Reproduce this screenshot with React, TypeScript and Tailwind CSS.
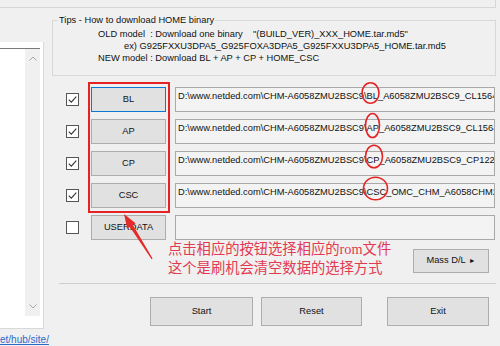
import React from "react";

const ui = { fontFamily: '"Liberation Sans", Arial, sans-serif' };

function Check({ checked }: { checked: boolean }) {
  return (
    <div className="w-[13px] h-[13px] border border-[#555] bg-white flex items-center justify-center shrink-0">
      {checked && (
        <svg width="11" height="11" viewBox="0 0 11 11">
          <path d="M1.8 5.6 L4.3 8.1 L9.3 2.6" fill="none" stroke="#333" strokeWidth="1.1" />
        </svg>
      )}
    </div>
  );
}

const rows = [
  { label: "BL", path: "D:\\www.netded.com\\CHM-A6058ZMU2BSC9\\BL_A6058ZMU2BSC9_CL15649xxx", checked: true, focus: true },
  { label: "AP", path: "D:\\www.netded.com\\CHM-A6058ZMU2BSC9\\AP_A6058ZMU2BSC9_CL15649xxx", checked: true },
  { label: "CP", path: "D:\\www.netded.com\\CHM-A6058ZMU2BSC9\\CP_A6058ZMU2BSC9_CP12295xxx", checked: true },
  { label: "CSC", path: "D:\\www.netded.com\\CHM-A6058ZMU2BSC9\\CSC_OMC_CHM_A6058CHM2BSC9", checked: true },
  { label: "USERDATA", path: "", checked: false },
];

export default function App() {
  return (
    <div
      className="relative w-[500px] h-[346px] bg-[#f0f0f0] overflow-hidden text-[9.3px] text-[#111] flex flex-col"
      style={ui}
    >
      {/* top group box remnant */}
      <div className="h-[8px] w-[496px] border-b border-r border-[#d6d6d6] shrink-0" />

      <div className="flex flex-row">
        {/* left column */}
        <div className="w-[44px] flex flex-col shrink-0">
          <div className="mt-[34px] h-[287px] bg-white border-r border-b border-[#d9d9d9] pt-[6px] flex flex-col">
            <div className="w-[40px] h-[268px] border-t border-[#7a7a7a] flex flex-row">
              <div className="flex-1 bg-white" />
              <div className="w-[15px] bg-[#f0f0f0] flex flex-col items-center justify-between py-[7px]">
                <svg width="8" height="5" viewBox="0 0 8 5">
                  <path d="M0.5 4.5 L4 1 L7.5 4.5" fill="none" stroke="#a6a6a6" strokeWidth="1" />
                </svg>
                <svg width="8" height="5" viewBox="0 0 8 5">
                  <path d="M0.5 0.5 L4 4 L7.5 0.5" fill="none" stroke="#a6a6a6" strokeWidth="1" />
                </svg>
              </div>
            </div>
          </div>
          <div className="mt-[5px] text-[10px] leading-[12px] text-[#2a6acb] underline whitespace-nowrap">
            et/hub/site/
          </div>
        </div>

        {/* right column */}
        <div className="ml-[8px] w-[444px] flex flex-col">
          {/* tips group */}
          <div className="relative mt-[12px] h-[56px] border border-[#d8d8d8] pt-[7px] leading-[12px]">
            <div className="absolute -top-[7px] left-[5px] px-[1px] bg-[#f0f0f0] leading-[12px]">
              Tips - How to download HOME binary
            </div>
            <div className="pl-[45px] whitespace-pre">{'OLD model  : Download one binary    "(BUILD_VER)_XXX_HOME.tar.md5"'}</div>
            <div className="pl-[71px] whitespace-pre">ex) G925FXXU3DPA5_G925FOXA3DPA5_G925FXXU3DPA5_HOME.tar.md5</div>
            <div className="pl-[45px] whitespace-pre">NEW model : Download BL + AP + CP + HOME_CSC</div>
          </div>

          {/* rows */}
          <div className="mt-[11px] flex flex-col gap-[7px]">
            {rows.map((r) => (
              <div key={r.label} className="h-[25px] flex flex-row items-center">
                <div className="ml-[14px]">
                  <Check checked={r.checked} />
                </div>
                <div
                  className={
                    r.focus
                      ? "ml-[12px] w-[75px] h-[25px] bg-[#e1e1e1] border border-[#0a78d4] flex items-center justify-center"
                      : "ml-[12px] w-[75px] h-[25px] bg-[#e1e1e1] border border-[#adadad] flex items-center justify-center"
                  }
                >
                  {r.label}
                </div>
                <div className="ml-[9px] w-[320px] h-[25px] bg-[#f3f3f3] border border-[#a9a9a9] overflow-hidden pl-[2px] pt-[2px] leading-[12px] whitespace-nowrap">
                  {r.path}
                </div>
              </div>
            ))}
          </div>

          {/* annotation + mass D/L */}
          <div className="h-[39px] flex flex-row items-start">
            <div
              className="ml-[116px] text-[14.3px] leading-[19px] text-[#e23a52] whitespace-nowrap"
              style={{ fontFamily: '"Liberation Serif", "Noto Sans CJK SC", serif' }}
            >
              <div>点击相应的按钮选择相应的rom文件</div>
              <div>这个是刷机会清空数据的选择方式</div>
            </div>
            <div className="ml-auto mr-[7px] mt-[9px] w-[76px] h-[24px] bg-[#e1e1e1] border border-[#adadad] flex items-center justify-center gap-[3px]">
              <span>Mass D/L</span>
              <span className="text-[7px]">►</span>
            </div>
          </div>

          <div className="mt-[4px] ml-[7px] border-t border-[#cfcfcf]" />

          <div className="mt-[13px] flex flex-row">
            <div className="ml-[98px] w-[103px] h-[29px] bg-[#e1e1e1] border border-[#adadad] flex items-center justify-center">
              Start
            </div>
            <div className="ml-[8px] w-[101px] h-[29px] bg-[#e1e1e1] border border-[#adadad] flex items-center justify-center">
              Reset
            </div>
            <div className="ml-[25px] w-[102px] h-[29px] bg-[#e1e1e1] border border-[#adadad] flex items-center justify-center">
              Exit
            </div>
          </div>
        </div>
      </div>

      {/* red annotation overlay */}
      <svg
        className="absolute left-0 top-0 pointer-events-none"
        width="500"
        height="346"
        viewBox="0 0 500 346"
      >
        <rect x="89" y="83" width="80" height="129" fill="none" stroke="#e42424" strokeWidth="2" />
        <ellipse cx="370.5" cy="93" rx="8.5" ry="10.3" fill="none" stroke="#e42424" strokeWidth="1.6" />
        <ellipse cx="372.5" cy="125.5" rx="7" ry="12" fill="none" stroke="#e42424" strokeWidth="1.6" />
        <ellipse cx="374" cy="156.5" rx="8.5" ry="11.3" fill="none" stroke="#e42424" strokeWidth="1.6" />
        <ellipse cx="375.5" cy="188.5" rx="12" ry="11.3" fill="none" stroke="#e42424" strokeWidth="1.6" />
        <polygon
          points="124,214 135.6,223.3 132.9,225.0 152.6,258.6 151.6,259.2 129.9,226.9 127.2,228.5"
          fill="#e42a2a"
        />
      </svg>
    </div>
  );
}
